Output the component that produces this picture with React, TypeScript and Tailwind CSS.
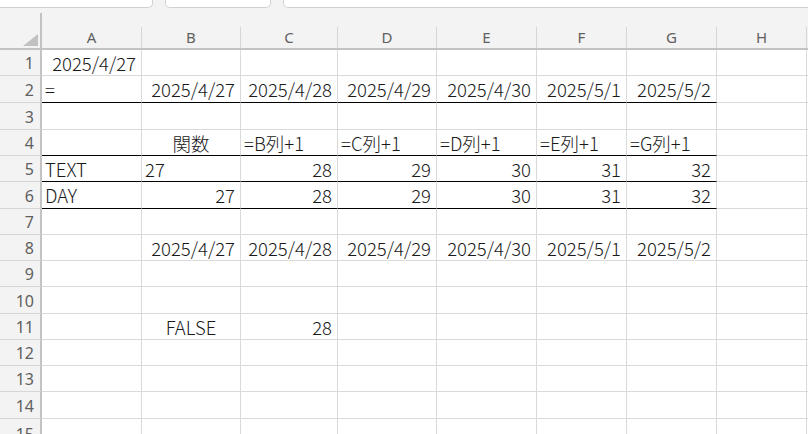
import React from 'react';

type Align = 'l' | 'r' | 'c';
type Cell = [string, Align] | null;

interface Row {
  h: string;
  cells: Cell[];
  line?: boolean;
}

const GRID = 'grid grid-cols-[42px_100px_99px_97px_99px_100px_90px_90px_90px_1fr]';
const LETTERS = ['A', 'B', 'C', 'D', 'E', 'F', 'G', 'H', ''];

const dates: Cell[] = [
  ['2025/4/27', 'r'],
  ['2025/4/28', 'r'],
  ['2025/4/29', 'r'],
  ['2025/4/30', 'r'],
  ['2025/5/1', 'r'],
  ['2025/5/2', 'r'],
];
const nums = (from: number): Cell[] => [0, 1, 2, 3, 4].map((i) => [String(from + i), 'r'] as Cell);

const rows: Row[] = [
  { h: 'h-[26px]', cells: [['2025/4/27', 'r']] },
  { h: 'h-[27px]', cells: [['=', 'l'], ...dates], line: true },
  { h: 'h-[27px]', cells: [] },
  {
    h: 'h-[26px]',
    cells: [null, ['関数', 'c'], ['=B列+1', 'l'], ['=C列+1', 'l'], ['=D列+1', 'l'], ['=E列+1', 'l'], ['=G列+1', 'l']],
    line: true,
  },
  { h: 'h-[26px]', cells: [['TEXT', 'l'], ['27', 'l'], ...nums(28)], line: true },
  { h: 'h-[27px]', cells: [['DAY', 'l'], ['27', 'r'], ...nums(28)], line: true },
  { h: 'h-[26px]', cells: [] },
  { h: 'h-[26px]', cells: [null, ...dates] },
  { h: 'h-[26px]', cells: [] },
  { h: 'h-[27px]', cells: [] },
  { h: 'h-[26px]', cells: [null, ['FALSE', 'c'], ['28', 'r']] },
  { h: 'h-[26px]', cells: [] },
  { h: 'h-[26px]', cells: [] },
  { h: 'h-[27px]', cells: [] },
  { h: 'h-[30px]', cells: [] },
];

const alignClass = (a: Align) =>
  a === 'r' ? 'justify-end pr-[5px]' : a === 'c' ? 'justify-center' : 'justify-start pl-[3px]';

const TopBar = () => (
  <div className="flex h-[8px] bg-[#f3f3f3] overflow-hidden">
    <div className="ml-[-10px] w-[163px] h-[8px] bg-white border-x border-b border-[#d1d1d1] rounded-b-[5px]"></div>
    <div className="ml-[12px] w-[106px] h-[8px] bg-white border-x border-b border-[#d1d1d1] rounded-b-[5px]"></div>
    <div className="ml-[12px] flex-1 mr-[-10px] h-[8px] bg-white border-x border-b border-[#d1d1d1] rounded-b-[5px]"></div>
  </div>
);

const ColumnHeader = () => (
  <div className={`${GRID} h-[42px] bg-[#f3f3f3] border-b-2 border-[#c3c3c3]`}>
    <div className="relative flex flex-col justify-end">
      <div className="relative h-[35px] border-r-2 border-[#c3c3c3]">
        <svg className="absolute right-[2px] bottom-[2px]" width="15" height="12" viewBox="0 0 15 12">
          <polygon points="15,0 15,12 0,12" fill="#c1c1c1" />
        </svg>
      </div>
    </div>
    {LETTERS.map((l, i) => (
      <div key={i} className="flex flex-col justify-end">
        <div
          className={`h-[21px] flex items-center justify-center text-[15px] leading-none text-[#5f5f5f] font-['Noto_Sans',sans-serif] ${
            l ? 'border-r border-[#d6d6d6]' : ''
          }`}
        >
          {l}
        </div>
      </div>
    ))}
  </div>
);

export default function App() {
  return (
    <div className="w-[808px] h-[434px] overflow-hidden bg-white">
      <TopBar />
      <ColumnHeader />
      {rows.map((row, r) => (
        <div key={r} className={`${GRID} ${row.h}`}>
          <div className="flex items-center justify-end pr-[6px] pt-[1px] bg-[#f3f3f3] border-r-2 border-r-[#c3c3c3] border-b border-b-[#d6d6d6] text-[16px] leading-none text-[#5f5f5f] font-['Noto_Sans',sans-serif]">
            {r + 1}
          </div>
          {LETTERS.map((_, c) => {
            const cell = row.cells[c] ?? null;
            const dark = row.line && c < 7;
            return (
              <div
                key={c}
                className={`flex items-center pt-[1px] overflow-hidden whitespace-nowrap text-[18.5px] leading-none text-[#1a1a1a] font-light font-['Noto_Sans_CJK_JP',sans-serif] ${
                  c < 8 ? 'border-r border-r-[#dadada]' : ''
                } ${dark ? 'border-b border-b-black' : 'border-b border-b-[#dadada]'} ${
                  cell ? alignClass(cell[1]) : ''
                }`}
              >
                {cell ? cell[0] : ''}
              </div>
            );
          })}
        </div>
      ))}
    </div>
  );
}
